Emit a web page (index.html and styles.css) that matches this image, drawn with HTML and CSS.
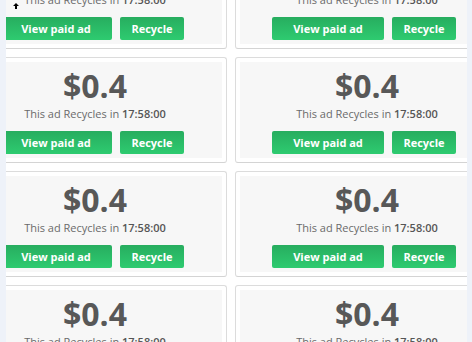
FILE: index.html
```html
<!DOCTYPE html>
<html>
<head>
<meta charset="utf-8">
<link rel="stylesheet" href="styles.css">
</head>
<body>
<div class="frame">
  <div class="grid">
    <div class="card"><div class="panel"><div class="price">$0.4</div><div class="note">This ad Recycles in <b>17:58:00</b></div><div class="actions"><a class="btn btn-view">View paid ad</a><a class="btn btn-rec">Recycle</a></div></div></div>
    <div class="card"><div class="panel"><div class="price">$0.4</div><div class="note">This ad Recycles in <b>17:58:00</b></div><div class="actions"><a class="btn btn-view">View paid ad</a><a class="btn btn-rec">Recycle</a></div></div></div>
    <div class="card"><div class="panel"><div class="price">$0.4</div><div class="note">This ad Recycles in <b>17:58:00</b></div><div class="actions"><a class="btn btn-view">View paid ad</a><a class="btn btn-rec">Recycle</a></div></div></div>
    <div class="card"><div class="panel"><div class="price">$0.4</div><div class="note">This ad Recycles in <b>17:58:00</b></div><div class="actions"><a class="btn btn-view">View paid ad</a><a class="btn btn-rec">Recycle</a></div></div></div>
    <div class="card"><div class="panel"><div class="price">$0.4</div><div class="note">This ad Recycles in <b>17:58:00</b></div><div class="actions"><a class="btn btn-view">View paid ad</a><a class="btn btn-rec">Recycle</a></div></div></div>
    <div class="card"><div class="panel"><div class="price">$0.4</div><div class="note">This ad Recycles in <b>17:58:00</b></div><div class="actions"><a class="btn btn-view">View paid ad</a><a class="btn btn-rec">Recycle</a></div></div></div>
    <div class="card"><div class="panel"><div class="price">$0.4</div><div class="note">This ad Recycles in <b>17:58:00</b></div><div class="actions"><a class="btn btn-view">View paid ad</a><a class="btn btn-rec">Recycle</a></div></div></div>
    <div class="card"><div class="panel"><div class="price">$0.4</div><div class="note">This ad Recycles in <b>17:58:00</b></div><div class="actions"><a class="btn btn-view">View paid ad</a><a class="btn btn-rec">Recycle</a></div></div></div>
  </div>
  <svg class="cursor" width="6" height="6" viewBox="0 0 6 6"><path d="M3 0 L6 3 L4 3 L4 6 L2 6 L2 3 L0 3 Z" fill="#000"/></svg>
</div>
</body>
</html>
```
FILE: styles.css
```css
html, body {
  margin: 0;
  padding: 0;
}
body {
  background: #eef2f9;
  width: 472px;
  height: 342px;
  overflow: hidden;
  font-family: "Open Sans", "Noto Sans", sans-serif;
}
.frame {
  position: relative;
  margin: 0 5px 0 6px;
  height: 342px;
  overflow: hidden;
  background: #fff;
}
.grid {
  display: grid;
  grid-template-columns: 264px 264px;
  column-gap: 8px;
  row-gap: 8px;
  margin-top: -57px;
  margin-left: -43px;
}
.card {
  border: 1px solid #dcdcdc;
  border-bottom-color: #d4d4d4;
  border-radius: 3px;
  background: #fff;
  padding: 4px;
  height: 106px;
  box-sizing: border-box;
}
.panel {
  background: #f7f7f7;
  height: 96px;
  box-sizing: border-box;
  padding: 6px 0 4px;
  text-align: center;
  display: flex;
  flex-direction: column;
}
.price {
  font-size: 32px;
  font-weight: 700;
  line-height: 36px;
  color: #585858;
}
.note {
  margin-top: 3px;
  font-size: 11px;
  line-height: 14px;
  color: #6a6a6a;
}
.note b {
  color: #555;
  font-weight: 600;
}
.actions {
  margin-top: 10px;
  display: flex;
  justify-content: center;
  gap: 8px;
  padding-right: 6px;
}
.btn {
  display: flex;
  align-items: center;
  justify-content: center;
  height: 23px;
  border-radius: 2px;
  background: linear-gradient(#27ad5f, #2ecb70);
  color: #fff;
  font-size: 11px;
  font-weight: 700;
  text-decoration: none;
}
.btn-view { width: 112px; }
.btn-rec { width: 64px; }
.cursor {
  position: absolute;
  left: 7px;
  top: 3px;
}
```
